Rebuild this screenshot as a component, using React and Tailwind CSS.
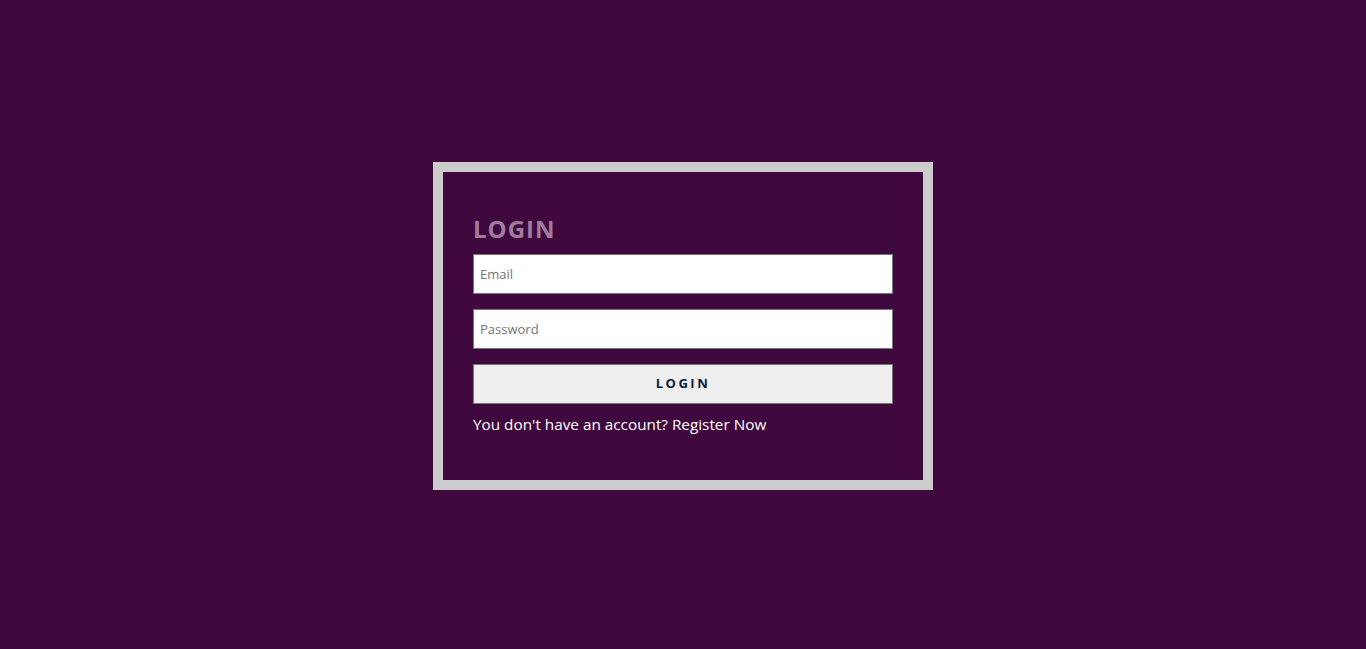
import React from "react";

const App = () => {
  return (
    <div className="min-h-[649px] w-full pt-[2px] bg-[#3f083f] flex items-center justify-center font-['Open_Sans',sans-serif]">
      <div className="w-[500px] border-[10px] border-[#cccccc]">
        <form className="pt-[42px] pb-[44px] px-[30px] flex flex-col" onSubmit={(e) => e.preventDefault()}>
          <h2 className="text-[24px] leading-[30px] font-bold tracking-[1px] text-[#a07ca0] mb-[10px]">LOGIN</h2>
          <input
            type="email"
            placeholder="Email"
            className="h-[40px] w-full bg-white border border-[#767676] px-[6px] text-[13px] text-gray-800 placeholder:text-[#757575] outline-none mb-[15px]"
          />
          <input
            type="password"
            placeholder="Password"
            className="h-[40px] w-full bg-white border border-[#767676] px-[6px] text-[13px] text-gray-800 placeholder:text-[#757575] outline-none mb-[15px]"
          />
          <button
            type="submit"
            className="h-[40px] w-full bg-[#efefef] border border-[#767676] text-[13px] font-bold tracking-[2.5px] text-[#0b1a3c]"
          >
            LOGIN
          </button>
          <p className="mt-[8px] text-[15.3px] leading-[24px] text-white">
            You don't have an account? <a href="#">Register Now</a>
          </p>
        </form>
      </div>
    </div>
  );
};

export default App;
